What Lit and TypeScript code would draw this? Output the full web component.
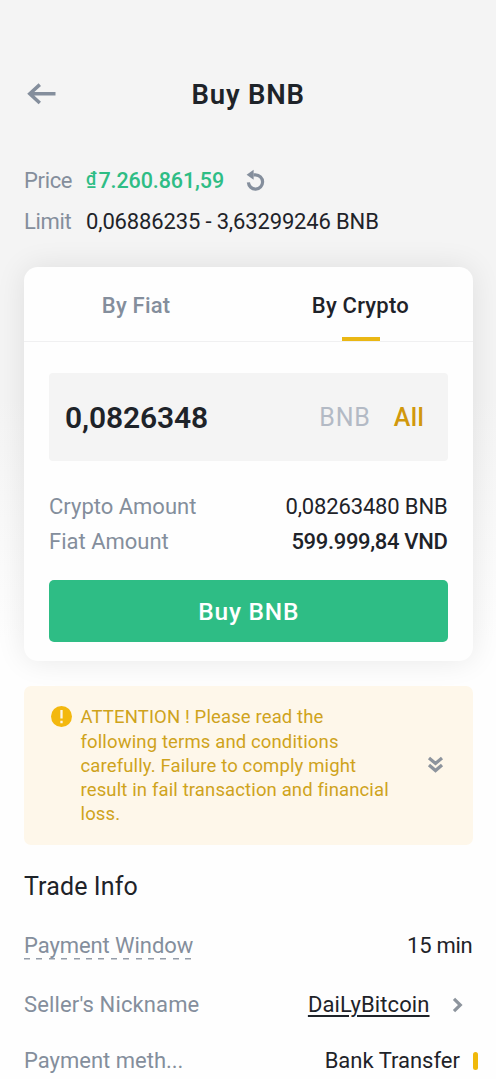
import { LitElement, html, css } from "lit";
import { customElement, state } from "lit/decorators.js";

@customElement("app-root")
class AppRoot extends LitElement {
  @state() private tab: "fiat" | "crypto" = "crypto";

  static styles = css`
    :host {
      display: block;
      height: 1079px;
      overflow: hidden;
      box-sizing: border-box;
      padding: 72px 23.5px 0 24px;
      background: linear-gradient(#f4f4f4 0, #f4f4f4 400px, #fefefe 640px);
      color: #1e2329;
      font: 400 22px/30px Roboto, sans-serif;
    }
    svg { display: block; flex: none; }
    header {
      display: grid;
      grid-template-columns: 40px 1fr 40px;
      align-items: center;
      height: 44px;
    }
    .back { margin-left: 1px; }
    h1 {
      margin: 0;
      padding-top: 2px;
      text-align: center;
      font-size: 27.5px;
      font-weight: 600;
      letter-spacing: 0.8px;
    }
    .quote { margin-top: 49.5px; display: grid; gap: 11.5px; }
    .line { display: flex; align-items: center; }
    .label { color: #848e9c; }
    .line .label { width: 62px; letter-spacing: -0.35px; }
    .price {
      font-size: 21.5px;
      font-weight: 500;
      letter-spacing: -0.1px;
      color: #2ebd85;
      display: flex;
    }
    .dong { width: 12.5px; font-size: 18px; line-height: 26px; }
    .reload { margin: -2px 0 0 22px; }
    .limit { letter-spacing: -0.15px; }
    .card {
      margin-top: 30px;
      height: 393.5px;
      box-sizing: border-box;
      border-radius: 14px;
      background: #fefefe;
      box-shadow: 0 0 30px rgba(0, 0, 0, 0.09);
    }
    .tabs {
      display: grid;
      grid-template-columns: 1fr 1fr;
      height: 74px;
      border-bottom: 1px solid #f0f0f1;
    }
    .tab {
      display: grid;
      grid-template-rows: 1fr 4.5px;
      justify-items: center;
      align-items: center;
      font-weight: 500;
      letter-spacing: 0.22px;
      color: #848e9c;
      cursor: pointer;
    }
    .tab span { padding-top: 7.5px; }
    .tab i { width: 38px; height: 4.5px; margin-left: 1px; }
    .tab.on { color: #1e2329; }
    .tab.on i { background: #eab714; }
    .body { padding: 31px 25px 0; }
    .field {
      display: flex;
      align-items: center;
      height: 87.5px;
      padding: 0 23px 0 16px;
      border-radius: 4px;
      background: #f4f4f4;
      font-size: 25px;
    }
    .value {
      flex: 1;
      font-size: 30px;
      font-weight: 600;
      letter-spacing: -0.13px;
      padding-top: 2px;
    }
    .unit { color: #b3bac5; letter-spacing: 0.8px; margin-right: 23px; padding-top: 2px; }
    .all { color: #d1980c; font-weight: 500; letter-spacing: 0.5px; padding-top: 2px; }
    .sums { margin: 31px 0 23px; display: grid; gap: 5px; }
    .sum { display: flex; justify-content: space-between; }
    .amount { letter-spacing: -0.15px; }
    .total { font-weight: 500; letter-spacing: -0.33px; }
    .buy {
      display: block;
      width: 100%;
      height: 62.5px;
      padding: 2px 0 0 1px;
      border: 0;
      border-radius: 5px;
      background: #2ebd85;
      color: #fff;
      font: 500 24.5px Roboto, sans-serif;
      letter-spacing: 0.8px;
    }
    .notice {
      display: flex;
      align-items: center;
      margin-top: 25px;
      height: 159px;
      box-sizing: border-box;
      padding: 0 29px 0 26.5px;
      border-radius: 7px;
      background: #fef7ea;
      color: #cfa31c;
      font-size: 18.5px;
      line-height: 24.25px;
    }
    .mark { align-self: flex-start; margin-top: 20.5px; }
    .notice p { margin: 0; padding: 2px 0 0 9px; flex: 1; letter-spacing: 0.13px; white-space: nowrap; }
    h2 {
      margin: 27.5px 0 0;
      font-size: 25px;
      font-weight: 400;
      letter-spacing: 0.12px;
    }
    .rows { display: grid; grid-template-rows: 59px 59px 54px; align-items: center; margin-top: 14px; }
    .row { display: flex; align-items: center; justify-content: space-between; }
    .dashed {
      height: 29px;
      margin-bottom: 1px;
      letter-spacing: -0.08px;
      background: repeating-linear-gradient(90deg, #959da9 0 6px, transparent 6px 12.4px) 0 100% / 100% 1.5px no-repeat;
    }
    .nickname { letter-spacing: 0.12px; }
    .time { letter-spacing: -0.25px; }
    .end { display: flex; align-items: center; }
    .nick {
      letter-spacing: 0.1px;
      text-decoration: underline;
      text-decoration-thickness: 1.5px;
      text-underline-offset: 3px;
    }
    .go { margin: 0 9.5px 0 22.5px; }
    .bank { margin-right: -5px; }
    .pill { width: 5px; height: 18.5px; margin-left: 12.5px; border-radius: 2.5px; background: #f0b90b; }
  `;

  private renderTab(id: "fiat" | "crypto", text: string) {
    return html`<div class="tab ${this.tab === id ? "on" : ""}" @click=${() => (this.tab = id)}>
      <span>${text}</span><i></i>
    </div>`;
  }

  render() {
    return html`
      <header>
        <svg class="back" width="32" height="24" viewBox="0 0 32 24" fill="none" stroke="#848e9c" stroke-width="3.5">
          <path d="M30.5 11.8H5M14.8 2.6L4.8 11.8L14.8 21" />
        </svg>
        <h1>Buy BNB</h1>
      </header>
      <section class="quote">
        <div class="line">
          <span class="label">Price</span><span class="price"><span class="dong">₫</span>7.260.861,59</span>
          <svg class="reload" width="20" height="22" viewBox="0 0 20 22">
            <path d="M7.5 5.9H9.5A7.1 7.1 0 1 1 2.4 13.4" fill="none" stroke="#848e9c" stroke-width="3.2" />
            <path d="M0.6 5.8L7.6 0.8V10.8Z" fill="#848e9c" />
          </svg>
        </div>
        <div class="line">
          <span class="label">Limit</span><span class="limit">0,06886235 - 3,63299246 BNB</span>
        </div>
      </section>
      <section class="card">
        <div class="tabs">${this.renderTab("fiat", "By Fiat")}${this.renderTab("crypto", "By Crypto")}</div>
        <div class="body">
          <div class="field">
            <span class="value">0,0826348</span><span class="unit">BNB</span><span class="all">All</span>
          </div>
          <div class="sums">
            <div class="sum"><span class="label">Crypto Amount</span><span class="amount">0,08263480 BNB</span></div>
            <div class="sum"><span class="label">Fiat Amount</span><span class="total">599.999,84 VND</span></div>
          </div>
          <button class="buy">Buy BNB</button>
        </div>
      </section>
      <section class="notice">
        <svg class="mark" width="21" height="21" viewBox="0 0 21 21">
          <circle cx="10.5" cy="10.5" r="10.5" fill="#f3b80f" />
          <path d="M10.5 4V12.5M10.5 14.8V17.3" stroke="#fef6e8" stroke-width="2.3" />
        </svg>
        <p>
          ATTENTION ! Please read the<br />following terms and conditions<br />carefully. Failure to comply might<br />result in fail transaction and financial<br />loss.
        </p>
        <svg width="17" height="18" viewBox="0 0 17 18" fill="none" stroke="#8d949d" stroke-width="3.3">
          <path d="M2 2L8.5 7.4L15 2M2 9L8.5 14.6L15 9" />
        </svg>
      </section>
      <h2>Trade Info</h2>
      <section class="rows">
        <div class="row"><span class="label dashed">Payment Window</span><span class="time">15 min</span></div>
        <div class="row">
          <span class="label nickname">Seller's Nickname</span>
          <span class="end">
            <span class="nick">DaiLyBitcoin</span>
            <svg class="go" width="11" height="16" viewBox="0 0 11 16" fill="none" stroke="#8d949d" stroke-width="3.2">
              <path d="M2 1.8L8.3 8L2 14.2" />
            </svg>
          </span>
        </div>
        <div class="row">
          <span class="label">Payment meth...</span>
          <span class="end bank">Bank Transfer<span class="pill"></span></span>
        </div>
      </section>
    `;
  }
}
